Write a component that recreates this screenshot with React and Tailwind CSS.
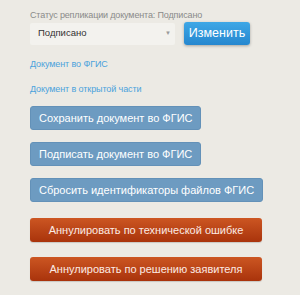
export default function App() {
  const blueBtn =
    "self-start h-[24px] px-[8px] rounded-[3px] bg-[#6d9bc1] text-white text-[11px] leading-none border border-[#6391b8]";
  const redBtn =
    "w-[232px] h-[24px] rounded-[3px] bg-gradient-to-b from-[#cc5622] to-[#a9330b] text-[#fbeae4] text-[11px] leading-none shadow-[0_1px_1px_rgba(0,0,0,0.15)]";

  return (
    <div
      className="w-[300px] h-[295px] bg-[#eceae4] pl-[30px] pt-[9px] flex flex-col"
      style={{ fontFamily: '"Liberation Sans", Arial, sans-serif' }}
    >
      <div className="text-[9px] tracking-[-0.15px] leading-[12px] text-[#8a8a8a]">
        Статус репликации документа: Подписано
      </div>

      <div className="mt-[1px] flex items-center gap-[9px]">
        <div className="w-[145px] h-[22px] bg-[#f3f2ee] rounded-[2px] flex items-center justify-between pl-[8px] pr-[4px]">
          <span className="text-[9.5px] text-[#333]">Подписано</span>
          <span className="text-[6px] text-[#9a9a9a]">▼</span>
        </div>
        <button className="w-[66px] h-[23px] rounded-[3px] bg-gradient-to-b from-[#3ea7e6] to-[#2587cf] text-white text-[12.5px] leading-none shadow-[0_1px_3px_rgba(0,0,0,0.3)]">
          Изменить
        </button>
      </div>

      <a className="mt-[13px] text-[9px] tracking-[-0.1px] leading-[12px] text-[#4ba2dc]">Документ во ФГИС</a>
      <a className="mt-[13px] text-[9px] tracking-[-0.1px] leading-[12px] text-[#4ba2dc]">
        Документ в открытой части
      </a>

      <div className="mt-[11px] flex flex-col gap-[12px]">
        <button className={blueBtn}>Сохранить документ во ФГИС</button>
        <button className={blueBtn}>Подписать документ во ФГИС</button>
        <button className={blueBtn}>Сбросить идентификаторы файлов ФГИС</button>
      </div>

      <div className="mt-[16px] flex flex-col gap-[15px]">
        <button className={redBtn}>Аннулировать по технической ошибке</button>
        <button className={redBtn}>Аннулировать по решению заявителя</button>
      </div>
    </div>
  );
}
